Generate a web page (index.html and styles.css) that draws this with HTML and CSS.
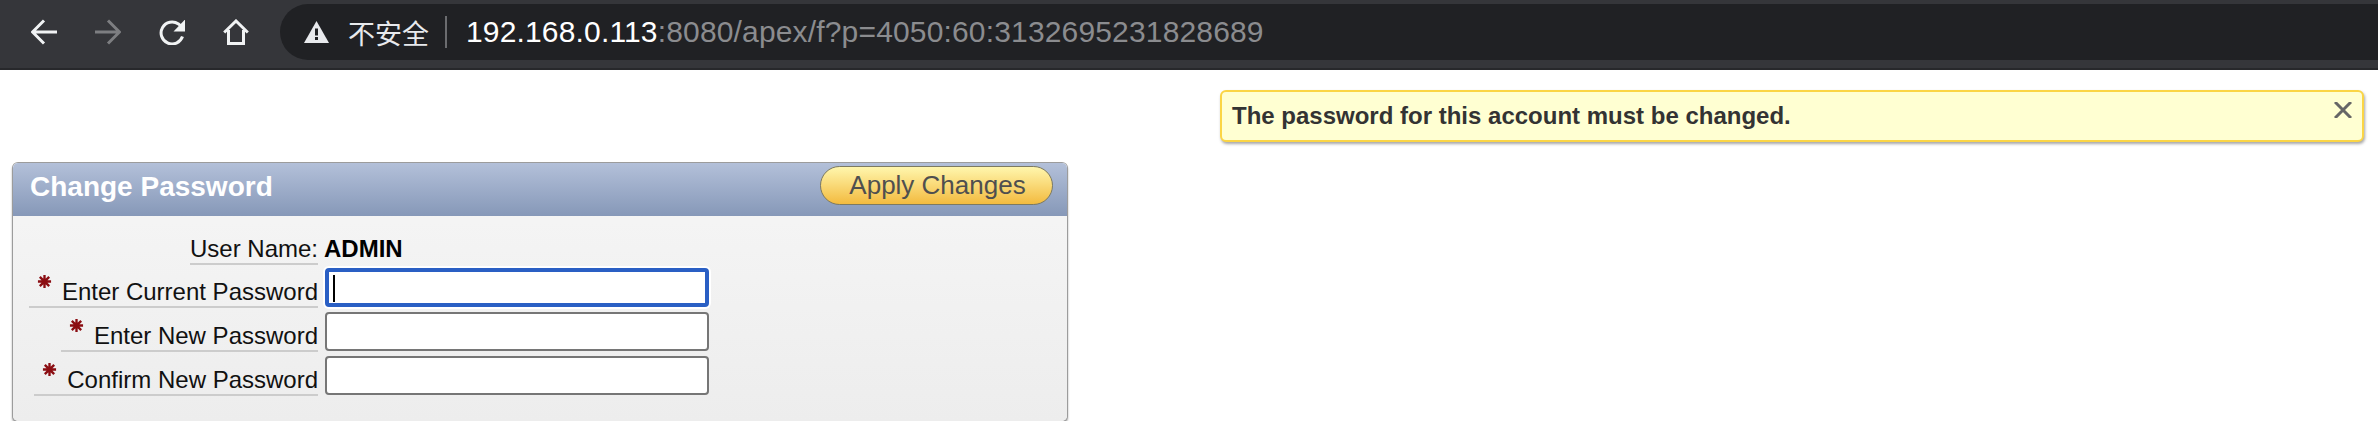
FILE: index.html
```html
<!DOCTYPE html>
<html lang="en">

<head>
    <meta charset="UTF-8">
    <title>Change Password</title>
    <link rel="stylesheet" href="styles.css">
</head>

<body>
    <div class="toolbar">
        <div class="nav">
            <svg class="icon" viewBox="0 0 26 26"><path d="M26 13H2.500M13 1.500 1.500 13 13 24.500"/></svg>
            <svg class="icon off" viewBox="0 0 26 26"><path d="M0 13h23.500M13 1.500 24.500 13 13 24.500"/></svg>
            <svg class="icon" viewBox="0 0 26 26"><path d="M23.500 17.500A11 11 0 1 1 19.500 5L24 9"/><path class="solid" d="M26.500 0v12.500H14.500z"/></svg>
            <svg class="icon" viewBox="0 0 26 26"><path d="M1.200 13.500 13 2l11.800 11.500M5.500 11v13.500h15V11"/></svg>
        </div>
        <div class="omnibox">
            <svg class="warn" viewBox="0 0 25 22"><path d="M12.500 0 25 22H0z" fill="#e8eaed"/><path d="M11 7.500h3v7h-3zM11 16h3v3h-3z" fill="#202124"/></svg>
            <span class="insecure">不安全</span>
            <span class="divider"></span>
            <span class="url"><b>192.168.0.113</b>:8080/apex/f?p=4050:60:3132695231828689</span>
        </div>
    </div>

    <div class="content">
        <div class="alert-row">
            <div class="alert">
                <span>The password for this account must be changed.</span>
                <svg class="close" viewBox="0 0 18 16"><path d="M1 0 17 16M17 0 1 16"/></svg>
            </div>
        </div>

        <div class="region">
            <div class="region-head">
                <h1>Change Password</h1>
                <button class="apply" type="button">Apply Changes</button>
            </div>
            <div class="region-body">
                <div class="row first">
                    <div class="label-cell"><label class="name">User Name:</label></div>
                    <strong class="value">ADMIN</strong>
                </div>
                <div class="row">
                    <div class="label-cell"><label class="name req"><svg class="star" viewBox="0 0 16 16"><path d="M8 1v14M1 8h14M3 3l10 10M13 3 3 13"/></svg>Enter Current Password</label></div>
                    <div class="field focus"><span class="caret"></span></div>
                </div>
                <div class="row">
                    <div class="label-cell"><label class="name req"><svg class="star" viewBox="0 0 16 16"><path d="M8 1v14M1 8h14M3 3l10 10M13 3 3 13"/></svg>Enter New Password</label></div>
                    <div class="field"></div>
                </div>
                <div class="row">
                    <div class="label-cell"><label class="name req"><svg class="star" viewBox="0 0 16 16"><path d="M8 1v14M1 8h14M3 3l10 10M13 3 3 13"/></svg>Confirm New Password</label></div>
                    <div class="field"></div>
                </div>
            </div>
        </div>
    </div>
</body>

</html>
```

FILE: styles.css
```css
html,
body {
    margin: 0;
    padding: 0;
    background: #fff;
}

body {
    font-family: "Liberation Sans", "Noto Sans CJK SC", sans-serif;
    overflow: hidden;
}

/* browser bar */
.toolbar {
    display: flex;
    height: 68px;
    padding-top: 4px;
    box-sizing: border-box;
    background: #35363a;
    box-shadow: 0 2px 0 #27282b;
}

.nav {
    display: flex;
    align-items: flex-start;
    gap: 38px;
    width: 280px;
    padding: 15px 0 0 31px;
    box-sizing: border-box;
}

.icon {
    width: 26px;
    height: 26px;
    flex: none;
    fill: none;
    stroke: #f1f3f4;
    stroke-width: 3;
}

.icon.off {
    stroke: #7d7e81;
}

.icon .solid {
    fill: #f1f3f4;
    stroke: none;
}

.omnibox {
    display: flex;
    align-items: center;
    flex: 1;
    height: 56px;
    padding-left: 24px;
    background: #202124;
    border-radius: 28px 0 0 28px;
}

.warn {
    width: 25px;
    height: 22px;
    flex: none;
}

.insecure {
    margin-left: 19px;
    color: #e8eaed;
    font-size: 27px;
}

.divider {
    width: 2px;
    height: 32px;
    margin: 0 19px 0 16px;
    background: #6b6c6f;
}

.url {
    color: #8b8c8f;
    font-size: 30px;
    letter-spacing: 0.16px;
}

.url b {
    color: #fff;
    font-weight: normal;
}

/* page */
.content {
    padding: 22px 14px 0 13px;
}

.alert-row {
    display: flex;
    justify-content: flex-end;
}

.alert {
    display: flex;
    justify-content: space-between;
    width: 1144px;
    height: 52px;
    padding: 0 10px;
    box-sizing: border-box;
    background: #ffffd2;
    border: 2px solid #fbd545;
    border-radius: 6px;
    box-shadow: 1px 2px 3px rgba(0, 0, 0, 0.35);
    color: #333;
    font-size: 24px;
    font-weight: bold;
    line-height: 47px;
}

.close {
    width: 18px;
    height: 16px;
    margin-top: 10px;
    fill: none;
    stroke: #666;
    stroke-width: 3;
}

.region {
    width: 1054px;
    margin-top: 21px;
    border-radius: 5px;
    background: linear-gradient(#f6f6f6, #ededed);
    box-shadow: 0 0 0 1px #9c9c9c, 0 2px 2px 1px rgba(0, 0, 0, 0.35);
}

.region-head {
    display: flex;
    align-items: flex-start;
    justify-content: space-between;
    height: 53px;
    padding: 3px 14px 0 17px;
    box-sizing: border-box;
    border-radius: 5px 5px 0 0;
    background: linear-gradient(#b3c0d9, #8698b8);
}

.region-head h1 {
    margin: 0;
    color: #fff;
    font-size: 28px;
    line-height: 41px;
}

.apply {
    width: 233px;
    height: 39px;
    padding: 0 0 0 2px;
    border: 1px solid #7d7a60;
    border-radius: 20px;
    background: linear-gradient(#fff6ad, #f3bb3f);
    color: #4f4f4f;
    font-family: inherit;
    font-size: 26px;
}

.region-body {
    height: 205px;
    padding-top: 9px;
    box-sizing: border-box;
}

.row {
    display: flex;
    align-items: flex-end;
    height: 44px;
}

.row.first {
    height: 40px;
}

.row.first + .row {
    height: 43px;
}

.label-cell {
    display: flex;
    justify-content: flex-end;
    flex: none;
    width: 305px;
}

.name {
    display: flex;
    align-items: flex-start;
    padding-top: 6px;
    border-bottom: 2px solid #ccc;
    color: #111;
    font-size: 24px;
    line-height: 28px;
}

.star {
    width: 15px;
    height: 15px;
    margin: -4px 10px 0 8px;
    fill: none;
    stroke: #8b0d12;
    stroke-width: 2.500;
}

.value {
    margin: 0 0 -1px 6px;
    color: #000;
    font-size: 24px;
    line-height: 34px;
}

.field {
    width: 384px;
    height: 39px;
    margin: 0 0 1px 7px;
    box-sizing: border-box;
    background: #fff;
    border: 2px solid #767676;
    border-radius: 4px;
}

.field.focus {
    padding: 3px 0 0 4px;
    border: 4px solid #2a5fc4;
    box-shadow: 0 0 0 2px #fff;
}

.caret {
    display: block;
    width: 2px;
    height: 27px;
    background: #000;
}
```
